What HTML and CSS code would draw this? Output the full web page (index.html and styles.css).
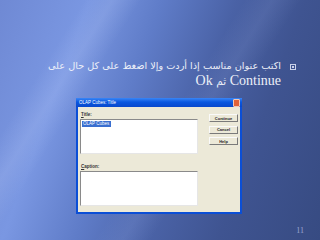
FILE: index.html
```html
<!DOCTYPE html>
<html lang="ar">
<head>
<meta charset="utf-8">
<link rel="stylesheet" href="styles.css">
</head>
<body>
<div class="slide">
  <div class="top">
    <p class="para"><span class="ar">اكتب عنوان مناسب إذا أردت وإلا اضغط على كل حال على</span><br><span class="lat">Continue</span> <span class="ar2">ثم</span> <span class="lat">Ok</span></p>
    <span class="bullet"></span>
  </div>
  <div class="dialog" dir="ltr">
    <div class="titlebar"><span>OLAP Cubes: Title</span><span class="close"></span></div>
    <div class="body">
      <div class="left">
        <div class="label"><u>T</u>itle:</div>
        <div class="box"><span class="sel">OLAP Cubes</span></div>
        <div class="label cap"><u>C</u>aption:</div>
        <div class="box box2"></div>
      </div>
      <div class="right">
        <div class="btn">Continue</div>
        <div class="btn">Cancel</div>
        <div class="btn">Help</div>
      </div>
    </div>
  </div>
  <div class="foot"><span class="num">11</span></div>
</div>
</body>
</html>
```
FILE: styles.css
```css
html, body { margin: 0; padding: 0; }
.slide {
  width: 320px;
  height: 240px;
  overflow: hidden;
  display: flex;
  flex-direction: column;
  background:
    linear-gradient(122deg, rgba(255,255,255,0) 18%, rgba(200,215,255,0.18) 24%, rgba(255,255,255,0) 30%, rgba(255,255,255,0) 52%, rgba(190,205,255,0.10) 58%, rgba(255,255,255,0) 64%),
    linear-gradient(110deg, #6f89d4 0%, #7a97e2 22%, #5f7cc8 40%, #4a62a6 58%, #3f5491 75%, #374b82 100%);
}
.top {
  display: flex;
  justify-content: flex-end;
  align-items: flex-start;
  gap: 9px;
  padding: 57px 24px 0 0;
}
.para {
  margin: 0;
  direction: rtl;
  text-align: right;
  color: #eceff8;
  font-family: "Liberation Serif", "DejaVu Sans", serif;
  font-size: 14px;
  line-height: 15px;
}
.ar, .ar2 {
  font-family: "DejaVu Sans", sans-serif;
  font-size: 9.7px;
}
.ar2 { font-size: 10.5px; }
.bullet {
  width: 4px;
  height: 4px;
  margin-top: 7px;
  border: 1px solid #c9d1ea;
  display: flex;
  align-items: center;
  justify-content: center;
}
.bullet::after {
  content: "";
  width: 2px;
  height: 2px;
  background: #c9d1ea;
}
.dialog {
  margin: 9px 0 0 76px;
  width: 166px;
  height: 116px;
  background: #0b4fd6;
  display: flex;
  flex-direction: column;
}
.titlebar {
  height: 9px;
  display: flex;
  align-items: center;
  justify-content: space-between;
  padding: 0 2px 0 3px;
  background: linear-gradient(#3a86f6, #0a58e0 45%, #0848cc);
  color: #fff;
  font: 4.5px "Liberation Sans", sans-serif;
}
.close {
  width: 5px;
  height: 6px;
  background: #e0623a;
  border: 1px solid #f2c8b8;
  border-radius: 1px;
}
.body {
  flex: 1;
  margin: 0 2px 2px;
  background: #ece9d8;
  display: flex;
  padding: 5px 2px 5px 2px;
}
.left {
  display: flex;
  flex-direction: column;
  width: 118px;
}
.label {
  height: 7px;
  padding-left: 1px;
  font: bold 4.5px "Liberation Sans", sans-serif;
  color: #333;
  line-height: 6px;
}
.cap { margin-top: 10px; }
.box {
  height: 35px;
  box-sizing: border-box;
  background: #fff;
  border: 1px solid;
  border-color: #8a8a8a #e6e6e6 #e6e6e6 #8a8a8a;
  padding: 1px 0 0 1px;
  font: 4.5px "Liberation Sans", sans-serif;
  line-height: 6px;
}
.box2 { height: 35px; }
.sel {
  display: inline-block;
  background: #3a6fd0;
  color: #fff;
  padding: 0 2px 0 1px;
}
.right {
  margin-left: auto;
  margin-top: 2px;
  display: flex;
  flex-direction: column;
  gap: 3.5px;
}
.btn {
  width: 29px;
  height: 8px;
  box-sizing: border-box;
  border: 1px solid;
  border-color: #fafafa #7a7a7a #7a7a7a #fafafa;
  background: #ece9d8;
  display: flex;
  align-items: center;
  justify-content: center;
  font: bold 4px "Liberation Sans", sans-serif;
  color: #222;
}
.foot {
  display: flex;
  justify-content: flex-end;
  padding: 12px 16px 0 0;
}
.num {
  font: 8px "Liberation Serif", serif;
  color: #9aa6d0;
  line-height: 10px;
}
```
